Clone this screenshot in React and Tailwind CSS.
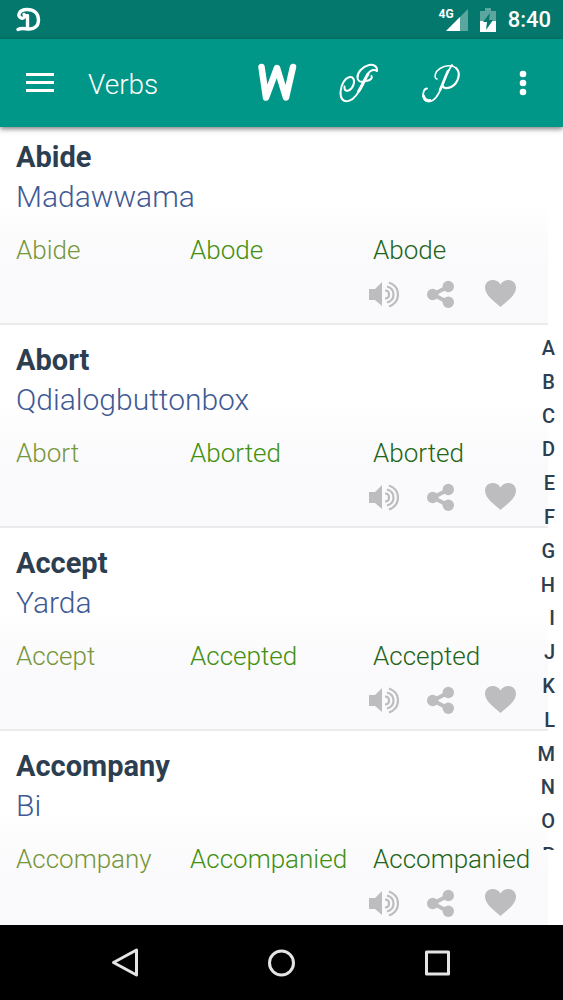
const verbs = [
  { base: "Abide", translation: "Madawwama", past: "Abode", participle: "Abode" },
  { base: "Abort", translation: "Qdialogbuttonbox", past: "Aborted", participle: "Aborted" },
  { base: "Accept", translation: "Yarda", past: "Accepted", participle: "Accepted" },
  { base: "Accompany", translation: "Bi", past: "Accompanied", participle: "Accompanied" },
];

const letters = "ABCDEFGHIJKLMNOP".split("");

function StatusBar() {
  return (
    <div className="flex h-[39px] shrink-0 items-center justify-between bg-[#04786c] px-3 text-white">
      <svg width="34" height="34" viewBox="0 0 34 34" fill="none" stroke="currentColor" strokeLinecap="round" strokeLinejoin="round" aria-hidden="true">
        <path d="M12 11.5c2 2-.5 4.500-3 3.500C5 13.500 6.500 6.500 15 6.500c7 0 11.500 4 11.500 10.500 0 6-4 9-9 9-4 0-8-1.500-11.500.500" strokeWidth="3.400" />
        <path d="M15.500 12.500v13M13 13h2.500" strokeWidth="3.400" />
      </svg>
      <div className="flex items-center">
        <span className="-mt-3 text-xs font-bold">4G</span>
        <svg width="22" height="22" viewBox="0 0 22 22" className="-ml-2" aria-hidden="true">
          <path d="M22 0v22H0z" fill="#5ba79f" />
          <path d="M14 8v14H0z" fill="#fff" />
        </svg>
        <svg width="16" height="24" viewBox="0 0 16 24" className="ml-3" aria-hidden="true">
          <path d="M5 0h6v3h5v10H0V3h5z" fill="#5ba79f" />
          <path d="M0 13h16v11H0z" fill="#fff" />
          <path d="M10 5 3 14h4l-1 8 7-10H9z" fill="#04786c" />
        </svg>
        <span className="ml-3 text-[22px] font-medium">8:40</span>
      </div>
    </div>
  );
}

function AppBar() {
  return (
    <header className="relative z-10 flex h-[88px] shrink-0 items-center bg-[#009688] px-5 text-white shadow-[0_2px_5px_rgba(0,0,0,0.5)]">
      <button aria-label="Open menu" className="flex h-10 w-10 items-center justify-center">
        <svg width="28" height="20" viewBox="0 0 28 20" fill="currentColor">
          <path d="M0 0h28v3H0zM0 8h28v3H0zM0 16h28v3H0z" />
        </svg>
      </button>
      <h1 className="ml-7 flex-1 pt-1 text-[28px] font-light">Verbs</h1>
      <div className="flex items-center gap-9">
        <button aria-label="Words">
          <svg width="46" height="46" viewBox="0 0 46 46" fill="none" stroke="currentColor" strokeWidth="6.500" strokeLinecap="round" strokeLinejoin="round">
            <path d="M4.500 7 9 37.500 20 8l9 29.500L36 7" />
          </svg>
        </button>
        <button aria-label="Idioms">
          <svg width="46" height="46" viewBox="0 0 46 46" fill="none" stroke="currentColor" strokeLinecap="round" strokeLinejoin="round">
            <path d="M38 10.500c.5-4-3.500-6.500-8-5.500C23.500 6.500 18 12.500 18.500 18c.3 3 3 4.500 6 3.500 2.500-.8 5.500-.2 7.500-2.500.8-1 1-2 .5-3" strokeWidth="2" />
            <path d="M38 11c-3-2-7-1-9.500 3.500C24.500 21.500 22 29 17 35.500c-4 5.500-10.500 7.500-13.500 4C.5 36 1 28 4.500 22 7.500 17 12.500 15.500 14.500 19c1.800 3.500-1 10-5 11.500-3 1-4.500-1-4-4" strokeWidth="2" />
            <path d="M29 14c-4 6.500-6 12.500-9.500 17.500" strokeWidth="3" />
          </svg>
        </button>
        <button aria-label="Phrasal verbs">
          <svg width="46" height="46" viewBox="0 0 46 46" fill="none" stroke="currentColor" strokeLinecap="round" strokeLinejoin="round">
            <path d="M31 5c-5 7-7 14-10 21-3 8-7 15.500-13 15.500-5 0-7-5-5.500-9.500.7-2.200 2-3.500 3.500-3.500" strokeWidth="1.800" />
            <path d="M27 11c-3 6-4.500 12-8 19" strokeWidth="2.600" />
            <path d="M16 19c-3.500-1-2-7.500 3-10.500C24 5.500 31 4.500 35 8" strokeWidth="1.500" />
            <path d="M35 8c5.500 5 2 15-4 18.500-4 2.500-8.500 2-9.500-.5" strokeWidth="2.200" />
            <path d="M2.500 36c1 3.500 3.500 5 6.500 4.500" strokeWidth="2.800" />
          </svg>
        </button>
        <button aria-label="More options" className="flex h-10 w-10 items-center justify-center">
          <svg width="8" height="26" viewBox="0 0 8 26" fill="currentColor">
            <circle cx="4" cy="4" r="3.300" />
            <circle cx="4" cy="13" r="3.300" />
            <circle cx="4" cy="22" r="3.300" />
          </svg>
        </button>
      </div>
    </header>
  );
}

function VerbRow({ verb }) {
  return (
    <li className="h-[203px] border-b-2 border-[#ebebec] bg-linear-to-b from-white from-40% to-[#faf9fb] to-70% px-4 pt-[15px]">
      <h2 className="text-[29px] leading-10 font-bold text-[#2c3e50]">{verb.base}</h2>
      <p className="text-[30px] leading-10 font-light text-[#3f5a94]">{verb.translation}</p>
      <div className="mt-[13px] flex text-[26px] leading-10 font-light">
        <span className="w-[174px] shrink-0 text-[#76963a]">{verb.base}</span>
        <span className="w-[183px] shrink-0 text-[#41900f]">{verb.past}</span>
        <span className="text-[#236518]">{verb.participle}</span>
      </div>
      <div className="mt-2.5 flex items-center justify-end gap-7 pr-4 text-[#bdbcbe]">
        <button aria-label="Listen">
          <svg width="30" height="28" viewBox="0 0 30 28" fill="none" stroke="currentColor" strokeWidth="2.200">
            <path d="M0 9h6l7-7v24l-7-6H0z" fill="currentColor" stroke="none" />
            <path d="M16 10.500c2.500 0 4 1.500 4 4s-1.500 4-4 4M18 6.500c4 1 6.500 4 6.500 8s-2.500 7-6.500 8M20 2.500c5.500 2 9 6.500 9 12s-3.500 10-9 12" />
          </svg>
        </button>
        <button aria-label="Share">
          <svg width="30" height="28" viewBox="0 0 30 28" fill="currentColor">
            <path d="M21.500 6.500 6 14.500l15.500 8" fill="none" stroke="currentColor" strokeWidth="4" />
            <circle cx="5.700" cy="14.500" r="5.700" />
            <circle cx="21.300" cy="6.500" r="5.700" />
            <circle cx="21.300" cy="22.200" r="5.700" />
          </svg>
        </button>
        <button aria-label="Favourite">
          <svg width="31" height="28" viewBox="0 0 31 28" fill="currentColor">
            <path d="M15.500 27C11 22.500 0 16 0 7.500 0 3 3.500 0 7.500 0c3.500 0 6.500 1.500 8 4.500C17 1.500 20 0 23.500 0 27.500 0 31 3 31 7.500 31 16 20 22.500 15.500 27z" />
          </svg>
        </button>
      </div>
    </li>
  );
}

function NavigationBar() {
  return (
    <nav aria-label="System" className="flex h-[75px] shrink-0 items-center justify-around bg-black px-12 text-[#e4e4e4]">
      <button aria-label="Back">
        <svg width="30" height="32" viewBox="0 0 30 32" fill="none" stroke="currentColor" strokeWidth="3" strokeLinejoin="round">
          <path d="M2.500 15.500 25.500 3v25z" />
        </svg>
      </button>
      <button aria-label="Home">
        <svg width="30" height="30" viewBox="0 0 30 30" fill="none" stroke="currentColor" strokeWidth="3">
          <circle cx="15.500" cy="15" r="12" />
        </svg>
      </button>
      <button aria-label="Recent apps">
        <svg width="30" height="30" viewBox="0 0 30 30" fill="none" stroke="currentColor" strokeWidth="3" strokeLinejoin="round">
          <path d="M4.500 4h22v22h-22z" />
        </svg>
      </button>
    </nav>
  );
}

export default function App() {
  return (
    <div className="flex h-screen flex-col overflow-hidden bg-white font-['Roboto',sans-serif]">
      <StatusBar />
      <AppBar />
      <main className="relative min-h-0 flex-1 overflow-hidden">
        <ul className="-mt-[5px] mr-[15px]">
          {verbs.map((verb) => (
            <VerbRow key={verb.base} verb={verb} />
          ))}
        </ul>
        <nav aria-label="Alphabet" className="absolute top-[204px] right-2 bottom-[75px] overflow-hidden">
          <ul className="grid h-[541px] auto-rows-fr text-right text-xl font-medium text-[#2c3e50]">
            {letters.map((letter) => (
              <li key={letter} className="flex items-center justify-end">
                {letter}
              </li>
            ))}
          </ul>
        </nav>
      </main>
      <NavigationBar />
    </div>
  );
}
